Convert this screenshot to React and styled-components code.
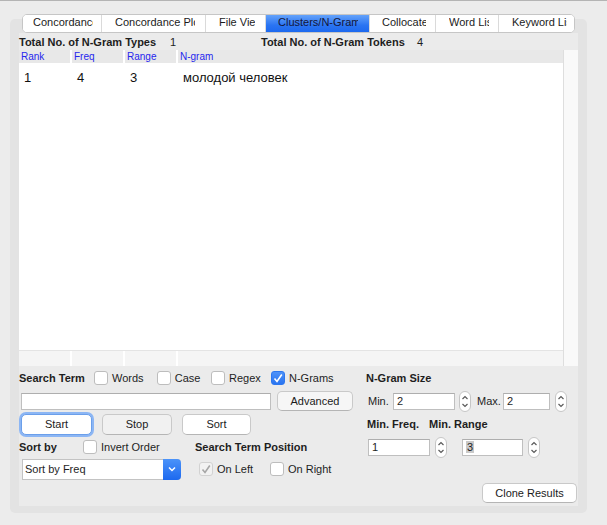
import React from 'react';
import styled, { createGlobalStyle } from 'styled-components';

const GlobalStyle = createGlobalStyle`
  html, body {
    margin: 0;
    background: #ececec;
  }
  body {
    font-family: "Liberation Sans", Arial, sans-serif;
    font-size: 11px;
    color: #1e1e1e;
  }
`;

// tab widths and the visible part of each (clipped) label
const tabs = [
    { label: 'Concordance', w: 78, pad: 10, clip: 60 },
    { label: 'Concordance Plot', w: 104, pad: 13, clip: 80 },
    { label: 'File View', w: 60, pad: 13, clip: 36 },
    { label: 'Clusters/N-Grams', w: 104, pad: 12, clip: 80, active: true },
    { label: 'Collocates', w: 66, pad: 12, clip: 44 },
    { label: 'Word List', w: 63, pad: 13, clip: 40 },
    { label: 'Keyword List', w: 76, pad: 13, clip: 55 },
];

const Spinner = () => (
    <SpinBox>
        <svg width="12" height="21" viewBox="0 0 12 21">
            <path d="M3.5 8 L6 5.5 L8.5 8" fill="none" stroke="#5a5a5a" strokeWidth="1.2" />
            <path d="M3.5 13 L6 15.5 L8.5 13" fill="none" stroke="#5a5a5a" strokeWidth="1.2" />
        </svg>
    </SpinBox>
);

const Check = ({ checked, disabled, label, w }) => (
    <CheckItem $w={w}>
        <Box $checked={checked} $disabled={disabled}>
            {checked && (
                <svg width="14" height="14" viewBox="0 0 14 14">
                    <path d="M3.5 7.5 L6 10.5 L10.8 3.5" fill="none" stroke={disabled ? '#a6a6a6' : '#fff'} strokeWidth="1.6" />
                </svg>
            )}
        </Box>
        <span>{label}</span>
    </CheckItem>
);

const App = () => {
    return (
        <Window>
            <GlobalStyle />
            <TabBar>
                {tabs.map((t, i) => (
                    <Tab key={i} $w={t.w} $pad={t.pad} $active={t.active} $first={i === 0}>
                        <TabLabel $clip={t.clip}>{t.label}</TabLabel>
                    </Tab>
                ))}
            </TabBar>
            <Pane>
                <Inner>
                    <TotalsRow>
                        <TotalLabel $w={151}>Total No. of N-Gram Types</TotalLabel>
                        <TotalValue $w={91}>1</TotalValue>
                        <TotalLabel $w={156}>Total No. of N-Gram Tokens</TotalLabel>
                        <TotalValue $w={40}>4</TotalValue>
                    </TotalsRow>

                    <Table>
                        <TableMain>
                            <HeaderRow>
                                <HeadCell>Rank</HeadCell>
                                <HeadCell>Freq</HeadCell>
                                <HeadCell>Range</HeadCell>
                                <HeadCell>N-gram</HeadCell>
                            </HeaderRow>
                            <TableBody>
                                <DataRow>
                                    <DataCell>1</DataCell>
                                    <DataCell>4</DataCell>
                                    <DataCell>3</DataCell>
                                    <DataCell>молодой человек</DataCell>
                                </DataRow>
                            </TableBody>
                            <FooterRow>
                                <FootCell />
                                <FootCell />
                                <FootCell />
                                <FootCell />
                            </FooterRow>
                        </TableMain>
                        <ScrollTrack />
                    </Table>

                    <Controls>
                        <ControlRow $h={24}>
                            <LeftCell>
                                <BoldLabel $w={75}>Search Term</BoldLabel>
                                <Check label="Words" w={62.7} />
                                <Check label="Case" w={54.3} />
                                <Check label="Regex" w={60} />
                                <Check label="N-Grams" checked w={80} />
                            </LeftCell>
                            <RightCell>
                                <BoldLabel>N-Gram Size</BoldLabel>
                            </RightCell>
                        </ControlRow>

                        <ControlRow $h={22}>
                            <LeftCell>
                                <TextField $w={250} $ml={2} />
                                <Button $w={76} $ml={6} $h={20} $bg="#f6f6f6">Advanced</Button>
                            </LeftCell>
                            <RightCell>
                                <FieldLabel $w={25} $ml={2}>Min.</FieldLabel>
                                <TextField $w={62}>2</TextField>
                                <SpinWrap $ml={4}><Spinner /></SpinWrap>
                                <FieldLabel $w={26} $ml={6}>Max.</FieldLabel>
                                <TextField $w={47}>2</TextField>
                                <SpinWrap $ml={5}><Spinner /></SpinWrap>
                            </RightCell>
                        </ControlRow>

                        <ControlRow $h={24}>
                            <LeftCell>
                                <Button $w={71} $ml={2} $focus>Start</Button>
                                <Button $w={70} $ml={10} $bg="#f1f1f1">Stop</Button>
                                <Button $w={69} $ml={10}>Sort</Button>
                            </LeftCell>
                            <RightCell>
                                <BoldLabel $w={62} $ml={1}>Min. Freq.</BoldLabel>
                                <BoldLabel>Min. Range</BoldLabel>
                            </RightCell>
                        </ControlRow>

                        <ControlRow $h={22}>
                            <LeftCell>
                                <BoldLabel $w={64}>Sort by</BoldLabel>
                                <Check label="Invert Order" w={112} />
                                <BoldLabel>Search Term Position</BoldLabel>
                            </LeftCell>
                            <RightCell>
                                <TextField $w={62} $ml={2}>1</TextField>
                                <SpinWrap $ml={5}><Spinner /></SpinWrap>
                                <TextField $w={61} $ml={15}><Selected>3</Selected></TextField>
                                <SpinWrap $ml={5}><Spinner /></SpinWrap>
                            </RightCell>
                        </ControlRow>

                        <ControlRow $h={22}>
                            <LeftCell>
                                <Combo>
                                    <ComboText>Sort by Freq</ComboText>
                                    <ComboArrow>
                                        <svg width="12" height="12" viewBox="0 0 12 12">
                                            <path d="M3 4.5 L6 7.5 L9 4.5" fill="none" stroke="#fff" strokeWidth="1.5" />
                                        </svg>
                                    </ComboArrow>
                                </Combo>
                                <CheckGap />
                                <Check label="On Left" checked disabled w={71} />
                                <Check label="On Right" w={80} />
                            </LeftCell>
                        </ControlRow>

                        <BottomRow>
                            <Button $w={95} $h={20}>Clone Results</Button>
                        </BottomRow>
                    </Controls>
                </Inner>
            </Pane>
        </Window>
    );
};

const Window = styled.div`
  border-top: 1px solid #b4b4b4;
  padding-top: 13px;
  height: 524px;
  box-sizing: border-box;
`;

const TabBar = styled.div`
  position: relative;
  z-index: 1;
  display: flex;
  margin-left: 22px;
  width: 553px;
  height: 19px;
  box-sizing: border-box;
  background: #fff;
  border: 1px solid #c6c6c6;
  border-radius: 5px;
  overflow: hidden;
`;

const Tab = styled.div`
  width: ${p => p.$w}px;
  flex: none;
  box-sizing: border-box;
  padding: 0 0 4px ${p => p.$pad}px;
  line-height: 15px;
  font-size: 11px;
  color: #1b1b1b;
  border-left: ${p => (p.$first ? 'none' : '1px solid #dadada')};
  background: ${p => (p.$active ? 'linear-gradient(#64a2fa, #2a74f2 60%, #1d69ef)' : '#fff')};
  ${p => p.$active && 'color: #14163a;'}
`;

const TabLabel = styled.div`
  width: ${p => p.$clip}px;
  white-space: nowrap;
  overflow: hidden;
  text-overflow: clip;
`;

const Pane = styled.div`
  margin: -14px 0 0 10px;
  width: 577px;
  height: 494px;
  box-sizing: border-box;
  padding: 14px 9px 7px 9px;
  background: #e3e3e3;
  border-radius: 5px;
`;

const Inner = styled.div`
  height: 100%;
  background: #ebebeb;
  display: flex;
  flex-direction: column;
`;

const TotalsRow = styled.div`
  display: flex;
  height: 17px;
  box-sizing: border-box;
  padding-top: 2px;
  line-height: 15px;
`;

const TotalLabel = styled.div`
  width: ${p => p.$w}px;
  font-weight: bold;
  white-space: nowrap;
`;

const TotalValue = styled.div`
  width: ${p => p.$w}px;
`;

const Table = styled.div`
  height: 316px;
  display: flex;
  background: #fff;
`;

const TableMain = styled.div`
  flex: 1;
  display: flex;
  flex-direction: column;
`;

const ScrollTrack = styled.div`
  width: 14px;
  border-left: 1px solid #dedede;
  background: #f9f9f9;
`;

const columns = `
  display: grid;
  grid-template-columns: 51px 51px 51px 1fr;
  column-gap: 2px;
`;

const HeaderRow = styled.div`
  ${columns}
  height: 13px;
`;

const HeadCell = styled.div`
  background: #e8e8e8;
  color: #2626ee;
  font-size: 10px;
  line-height: 13px;
  padding-left: 2px;
`;

const TableBody = styled.div`
  flex: 1;
`;

const DataRow = styled.div`
  ${columns}
  margin-top: 6px;
  font-size: 13px;
  line-height: 17px;
  color: #111;
`;

const DataCell = styled.div`
  padding-left: 5px;
  white-space: nowrap;
`;

const FooterRow = styled.div`
  ${columns}
  height: 15px;
  border-top: 1px solid #e4e4e4;
`;

const FootCell = styled.div`
  background: #f5f5f5;
`;

const Controls = styled.div`
  flex: 1;
  display: flex;
  flex-direction: column;
`;

const ControlRow = styled.div`
  display: flex;
  align-items: center;
  height: ${p => p.$h}px;
`;

const LeftCell = styled.div`
  width: 347px;
  flex: none;
  display: flex;
  align-items: center;
`;

const RightCell = styled.div`
  flex: 1;
  display: flex;
  align-items: center;
`;

const BoldLabel = styled.div`
  font-weight: bold;
  white-space: nowrap;
  margin-left: ${p => p.$ml || 0}px;
  ${p => p.$w && `width: ${p.$w}px; flex: none;`}
`;

const FieldLabel = styled.div`
  width: ${p => p.$w}px;
  margin-left: ${p => p.$ml || 0}px;
  flex: none;
`;

const CheckItem = styled.div`
  width: ${p => p.$w}px;
  flex: none;
  display: flex;
  align-items: center;
  gap: 4px;
  white-space: nowrap;
`;

const Box = styled.div`
  width: 14px;
  height: 14px;
  box-sizing: border-box;
  border-radius: 3px;
  display: flex;
  border: 1px solid ${p => (p.$checked && !p.$disabled ? '#2d78f0' : p.$disabled ? '#d2d2d2' : '#bdbdbd')};
  background: ${p => (p.$checked && !p.$disabled ? 'linear-gradient(#4f93f8, #2a75f1)' : p.$disabled ? '#f2f2f2' : '#fff')};
  svg {
    margin: -1px;
  }
`;

const CheckGap = styled.div`
  width: 18px;
  flex: none;
`;

const TextField = styled.div`
  width: ${p => p.$w}px;
  margin-left: ${p => p.$ml || 0}px;
  flex: none;
  height: 17px;
  box-sizing: border-box;
  background: #fff;
  border: 1px solid #bfbfbf;
  border-top-color: #aeaeae;
  padding-left: 3px;
  line-height: 15px;
  font-size: 11px;
`;

const Selected = styled.span`
  background: #c9c9c9;
  padding: 0 1px;
`;

const SpinWrap = styled.div`
  margin-left: ${p => p.$ml || 0}px;
  flex: none;
  display: flex;
`;

const SpinBox = styled.div`
  width: 12px;
  height: 21px;
  box-sizing: border-box;
  border: 1px solid #c6c6c6;
  border-radius: 6px;
  background: #fff;
  display: flex;
  align-items: center;
  justify-content: center;
  svg {
    margin: -1px;
  }
`;

const Button = styled.div`
  width: ${p => p.$w}px;
  height: ${p => p.$h || 21}px;
  margin-left: ${p => p.$ml || 0}px;
  flex: none;
  box-sizing: border-box;
  display: flex;
  align-items: center;
  justify-content: center;
  background: ${p => p.$bg || '#fff'};
  border: 1px solid #c9c9c9;
  border-bottom-color: #b5b5b5;
  border-radius: 5px;
  font-size: 11px;
  color: #1b1b1b;
  ${p => p.$focus && 'box-shadow: 0 0 0 2px #8cb6f4; border-color: #6b9fea;'}
`;

const Combo = styled.div`
  width: 159px;
  height: 21px;
  margin-left: 3px;
  flex: none;
  box-sizing: border-box;
  display: flex;
  background: #fff;
  border: 1px solid #c3c3c3;
  border-right: none;
  border-radius: 0 4px 4px 0;
`;

const ComboText = styled.div`
  flex: 1;
  padding-left: 2px;
  line-height: 19px;
  font-size: 11px;
`;

const ComboArrow = styled.div`
  width: 18px;
  margin: -1px 0;
  display: flex;
  align-items: center;
  justify-content: center;
  background: linear-gradient(#4b93f9, #1d69ef);
  border-radius: 0 4px 4px 0;
`;

const BottomRow = styled.div`
  flex: 1;
  display: flex;
  justify-content: flex-end;
  align-items: flex-start;
  padding: 3px 1px 0 0;
`;

export default App;
